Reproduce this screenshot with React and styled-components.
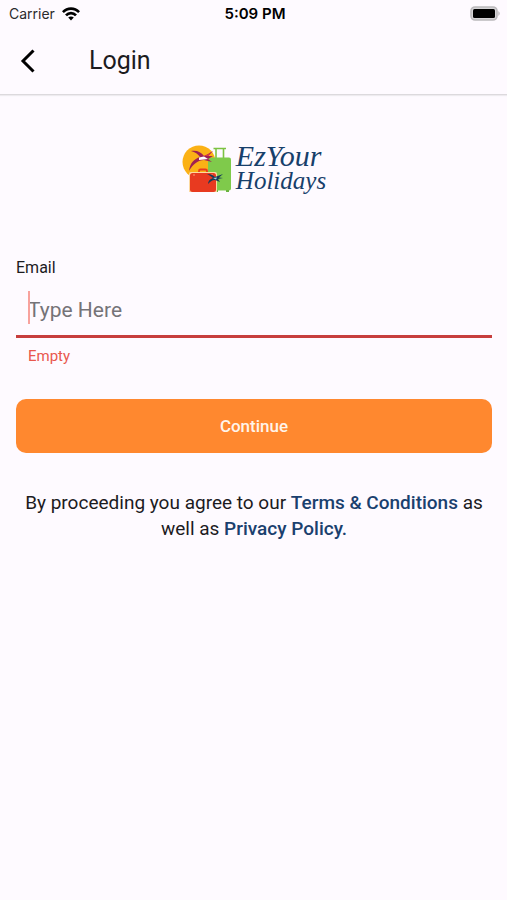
import React, { useState } from "react";
import styled, { createGlobalStyle } from "styled-components";

const App = () => {
  const [email, setEmail] = useState("");

  const onSubmit = (e) => {
    e.preventDefault();
  };

  return (
    <>
      <GlobalStyle />
      <StatusBar>
        <Carrier>
          Carrier
          <WifiIcon />
        </Carrier>
        <Clock>5:09 PM</Clock>
        <BatterySlot>
          <BatteryIcon />
        </BatterySlot>
      </StatusBar>
      <AppBar>
        <BackButton type="button" aria-label="Back">
          <BackIcon />
        </BackButton>
        <Title>Login</Title>
      </AppBar>
      <Main>
        <Logo>
          <LuggageIcon />
          <LogoName>
            <LogoWord $size={30}>EzYour</LogoWord>
            <LogoWord $size={25}>Holidays</LogoWord>
          </LogoName>
        </Logo>
        <form onSubmit={onSubmit} noValidate>
          <Label htmlFor="email">Email</Label>
          <Field>
            <EmailInput
              id="email"
              type="email"
              placeholder="Type Here"
              value={email}
              onChange={(e) => setEmail(e.target.value)}
              aria-invalid={!email}
              aria-describedby="email-error"
            />
            {!email && <Caret />}
          </Field>
          <ErrorText id="email-error">{email ? "" : "Empty"}</ErrorText>
          <ContinueButton type="submit">Continue</ContinueButton>
        </form>
        <Terms>
          By proceeding you agree to our{" "}
          <TermsLink href="#terms">Terms &amp; Conditions</TermsLink> as well as{" "}
          <TermsLink href="#privacy">Privacy Policy.</TermsLink>
        </Terms>
      </Main>
    </>
  );
};

const WifiIcon = () => (
  <svg width="18" height="14" viewBox="0 0 18 14" aria-hidden="true">
    <g fill="none" stroke="#000" strokeWidth="2.7">
      <path d="M0.9 5.2C5.4 0.4 12.6 0.4 17.1 5.2" />
      <path d="M4 8.4C6.8 5.4 11.2 5.4 14 8.4" />
    </g>
    <path d="M6.2 10.6C7.8 9 10.2 9 11.8 10.6L9 13.6Z" fill="#000" />
  </svg>
);

const BatteryIcon = () => (
  <svg width="31" height="15" viewBox="0 0 31 15" aria-hidden="true">
    <rect x="1" y="1" width="26" height="13" rx="4" fill="#d6d4d7" stroke="#bbb9bc" strokeWidth="1.6" />
    <rect x="3" y="3" width="22" height="9" rx="1.5" fill="#000" />
    <path d="M28.4 5Q31 7.5 28.4 10Z" fill="#b5b3b6" />
  </svg>
);

const BackIcon = () => (
  <svg width="16" height="24" viewBox="0 0 16 24" aria-hidden="true">
    <path d="M13.5 1.5L3 12L13.5 22.5" fill="none" stroke="#000" strokeWidth="3" />
  </svg>
);

const LuggageIcon = () => (
  <svg width="50" height="52" viewBox="0 0 50 52" aria-hidden="true">
    <circle cx="17" cy="19" r="16.5" fill="#fbb116" />
    {/* green trolley case */}
    <path d="M34 15V6M41.5 15V6M31.5 5.5H44" fill="none" stroke="#7cc242" strokeWidth="1.6" />
    <rect x="26" y="14.5" width="23" height="33" rx="2" fill="#7fca4b" />
    <path d="M33 47H36V49H33ZM44 47H47V49H44Z" fill="#6bb43f" />
    {/* red suitcase */}
    <path d="M17 30V28Q17 26.5 18.500 26.500H23.500Q25 26.500 25 28V30" fill="none" stroke="#e83a20" strokeWidth="1.8" />
    <path d="M9 29H33Q35 29 35 31V49H7V31Q7 29 9 29Z" fill="#fcd9a0" />
    <rect x="8" y="30" width="26" height="19" rx="2.500" fill="#e83a20" />
    <path d="M12 31V33M30 31V33" stroke="#f69b75" strokeWidth="1" />
    {/* large swallow */}
    <path d="M9 8C15 7 19 9 22 13C25 12 27 10 31 8L26 13L31 13L26 16L30 19L22 17C16 17 11 21 7 28C8 20 12 16 18 14C16 11 13 9 9 8Z" fill="#9f2152" />
    <path d="M17 14.500L22 13.500L26 16L22 16.500L17 17Z" fill="#fff" />
    <path d="M22 13C25 12 28 10 31 8L26 13Z" fill="#dc3345" />
    {/* small swallow */}
    <path d="M25 31C29 31 31 32 33 34L41 31L37 34.500L41 35L36 36L38 39L33 37C30 37 28 39 26 41C26 38 28 36 31 35C29 33 27 32 25 31Z" fill="#163b59" />
    <path d="M31 35L35 34.500L34 36.500Z" fill="#a9d9df" />
  </svg>
);

const GlobalStyle = createGlobalStyle`
  * {
    box-sizing: border-box;
  }

  body {
    margin: 0;
    background: #fefaff;
    color: #1c1b1e;
    font-family: Roboto, "Liberation Sans", sans-serif;
  }
`;

const StatusBar = styled.div`
  display: grid;
  grid-template-columns: 1fr auto 1fr;
  align-items: center;
  height: 27px;
  padding: 0 6px 0 9px;
  font-family: Inter, "Liberation Sans", sans-serif;
  font-size: 14px;
  color: #000;
`;

const Carrier = styled.span`
  display: flex;
  align-items: center;
  gap: 7px;
  color: #2b2a2d;
`;

const Clock = styled.span`
  font-size: 15px;
  font-weight: 600;
`;

const BatterySlot = styled.span`
  display: flex;
  justify-content: flex-end;
`;

const AppBar = styled.header`
  display: flex;
  align-items: center;
  gap: 41px;
  height: 68px;
  padding: 0 8px;
  border-bottom: 1px solid #dcd9dd;
  box-shadow: 0 1px 1px #eeebef;
`;

const BackButton = styled.button`
  display: flex;
  align-items: center;
  justify-content: center;
  width: 40px;
  height: 40px;
  padding: 0;
  border: none;
  background: none;
  cursor: pointer;
`;

const Title = styled.h1`
  margin: 0;
  font-size: 25px;
  line-height: 32px;
  font-weight: 400;
`;

const Main = styled.main`
  padding: 48px 15px 24px 16px;
`;

const Logo = styled.div`
  display: flex;
  justify-content: center;
  gap: 4px;
  margin-bottom: 63px;
`;

const LogoName = styled.div`
  display: flex;
  flex-direction: column;
  font-family: "Liberation Serif", serif;
  font-style: italic;
  line-height: 25px;
  color: #173f6b;
`;

const LogoWord = styled.span`
  font-size: ${(props) => props.$size}px;
`;

const Label = styled.label`
  display: block;
  font-size: 16px;
  line-height: 20px;
`;

const Field = styled.div`
  position: relative;
  border-bottom: 3px solid #c73e3d;
`;

const EmailInput = styled.input`
  display: block;
  width: 100%;
  height: 57px;
  padding: 8px 12px 2px;
  border: none;
  outline: none;
  background: none;
  font-family: inherit;
  font-size: 21px;
  color: #1c1b1e;
  caret-color: #f5877f;

  &::placeholder {
    color: #757377;
    opacity: 1;
  }
`;

const Caret = styled.span`
  position: absolute;
  top: 13px;
  left: 12px;
  width: 2px;
  height: 33px;
  background: #f8a29d;
`;

const ErrorText = styled.p`
  min-height: 20px;
  margin: 8px 12px 33px;
  font-size: 15px;
  line-height: 20px;
  color: #e9574d;
`;

const ContinueButton = styled.button`
  display: block;
  width: 100%;
  height: 54px;
  border: none;
  border-radius: 10px;
  background: #ff882f;
  font-family: inherit;
  font-size: 17px;
  font-weight: 500;
  color: #fff4ea;
  cursor: pointer;
`;

const Terms = styled.p`
  margin: 37px 0 0;
  font-size: 19px;
  line-height: 26px;
  text-align: center;
`;

const TermsLink = styled.a`
  font-weight: 500;
  color: #1a406e;
  text-decoration: none;
`;

export default App;
